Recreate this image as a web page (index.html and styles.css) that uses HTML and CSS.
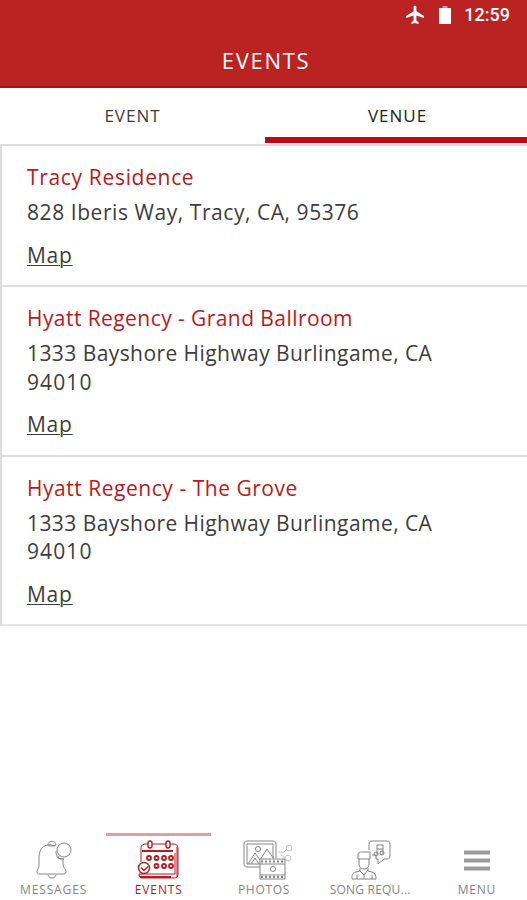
FILE: index.html
```html
<!DOCTYPE html>
<html lang="en">
<head>
<meta charset="utf-8">
<title>Events</title>
<link rel="stylesheet" href="styles.css">
</head>
<body>
<header class="header">
  <div class="status">
    <svg class="plane" viewBox="0 0 20 20"><path d="M19 13v-2l-7.600-4.700V2.100a1.400 1.400 0 0 0-2.800 0v4.200L1 11v2l7.600-2.400v5L6.500 17.200V19l3.500-1 3.500 1v-1.800l-2.100-1.600v-5z"/></svg>
    <svg class="battery" viewBox="0 0 12 18"><path class="cap" d="M3.500 0h5v2h-5z"/><path d="M0 2h12v16H0z"/></svg>
    <span class="time">12:59</span>
  </div>
  <h1 class="title">EVENTS</h1>
</header>
<nav class="tabs">
  <a class="tab">EVENT</a>
  <a class="tab tab-active">VENUE</a>
</nav>
<main class="venues">
  <section class="venue">
    <h2 class="name name-short">Tracy Residence</h2>
    <p class="address address-short">828 Iberis Way, Tracy, CA, 95376</p>
    <a class="map">Map</a>
  </section>
  <section class="venue venue-tall">
    <h2 class="name">Hyatt Regency - Grand Ballroom</h2>
    <p class="address">1333 Bayshore Highway Burlingame, CA<br><span class="zip">94010</span></p>
    <a class="map">Map</a>
  </section>
  <section class="venue venue-tall">
    <h2 class="name name-grove">Hyatt Regency - The Grove</h2>
    <p class="address">1333 Bayshore Highway Burlingame, CA<br><span class="zip">94010</span></p>
    <a class="map">Map</a>
  </section>
</main>
<footer class="bar">
  <a class="item">
    <svg class="icon" viewBox="0 0 52 44"><path d="M27 7c-9-4-16 2-16 11v8c0 4-2 4-2 7 0 2 1 2 3 2h23c2 0 3-1 3-3s-3-3-3-7v-6M20 6c0-5 8-5 8 0l-2 1h-4zM20 36c1 4 7 4 8 0"/><circle cx="36" cy="11" r="7"/><path d="M28 12c0 4 1 8 5 8h3M31 17l-1 2 4 1"/></svg>
    <span class="label label-wide">MESSAGES</span>
  </a>
  <a class="item item-active">
    <svg class="icon" viewBox="0 0 52 44"><path class="bold" d="M9 12h31M7 38h31"/><path d="M8 23V10c0-4 2-5 5-5h27c3 0 5 1 5 5v26c0 2-2 3-4 3H9c-2 0-3-1-3-4h36V14M44 8v30"/><rect class="holder" x="15" y="2" width="4" height="7" rx="2"/><rect class="holder" x="33" y="2" width="4" height="7" rx="2"/><g class="dates"><circle cx="16" cy="19" r="2"/><circle cx="23.500" cy="19" r="2"/><circle cx="31" cy="19" r="2"/><circle cx="38" cy="19" r="2"/><circle cx="23.500" cy="27" r="2"/><circle cx="31" cy="27" r="2"/><circle cx="38" cy="27" r="2"/></g><circle class="check" cx="11" cy="29" r="5.500"/><path class="tick" d="M8 28.500l3 3 4-4"/></svg>
    <span class="label label-active">EVENTS</span>
  </a>
  <a class="item">
    <svg class="icon" viewBox="0 0 52 44"><path d="M22 28H9c-2 0-3-1-3-3V5c0-2 1-3 3-3h26c2 0 3 1 3 3v14M22 25H9V5h26v14M10 25l7-11 5 7 7-11 7 10M13 25l4-6 4 6"/><circle cx="20" cy="10" r="2.500"/><path class="sheet" d="M22 20h25v20H22zM22 25h25M22 36h25"/><path class="film" d="M23 22.500h24M23 38h24"/><circle cx="35" cy="30" r="2.500"/><path class="faint" d="M40 13h6l3-3M43 16l4 3"/><circle class="faint" cx="51" cy="9" r="2.800"/><circle class="faint" cx="50" cy="19" r="2.800"/></svg>
    <span class="label">PHOTOS</span>
  </a>
  <a class="item">
    <svg class="icon icon-song" viewBox="0 0 52 44"><path d="M24 11V5c0-2 1-3 3-3h15c2 0 3 1 3 3v12c0 2-1 3-3 3h-3l-6 5v-5h-2v-4h-4M32 16V6h6v9M32 10h6"/><circle cx="31" cy="15" r="2"/><circle cx="37" cy="14" r="2"/><path d="M13 20v-4c0-3 2-3 4-3h8v7zM14 20v5c0 3 2 5 5 5s5-2 5-5v-5M15 29v3l-4 1c-4 1-4 3-4 7h24c0-4-1-6-4-7l-4-1v-3M14 31l5 5 4-5M19 36v4M12 36v4M27 36v4"/></svg>
    <span class="label label-narrow">SONG REQU...</span>
  </a>
  <a class="item item-menu">
    <svg class="icon" viewBox="0 0 52 44"><path class="menu" d="M13 13.500h26M13 21.500h26M13 29.500h26"/></svg>
    <span class="label">MENU</span>
  </a>
</footer>
</body>
</html>
```
FILE: styles.css
```css
* { box-sizing: border-box; }
body { margin: 0; height: 900px; display: flex; flex-direction: column; background: #fff; color: #3d3d3d; font-family: "Open Sans", sans-serif; overflow: hidden; }
.header { height: 88px; flex: none; background: #bb2322; border-bottom: 2px solid #b20b0d; color: #fff; }
.status { height: 30px; display: flex; align-items: center; justify-content: flex-end; padding-right: 17px; }
.plane { width: 20px; height: 20px; fill: #fff; }
.battery { width: 12px; height: 18px; fill: #fff; margin: 0 13px 0 14px; }
.cap { fill: #d98c8a; }
.time { font: 500 18px/30px Roboto, sans-serif; }
.title { margin: 14px 0 0; padding-left: 5px; text-align: center; font-weight: 400; font-size: 22px; line-height: 32px; letter-spacing: 1.7px; }
.tabs { height: 56px; flex: none; display: grid; grid-template-columns: 265px 1fr; }
.tab { height: 55px; padding-top: 1px; text-align: center; font-size: 17px; line-height: 53px; letter-spacing: 1px; }
.tab-active { border-bottom: 6px solid #b70c12; color: #222; padding-left: 3px; }
.venues { flex: none; border-left: 2px solid #ddd; border-bottom: 2px solid #e4e4e4; }
.venue { height: 141px; border-top: 2px solid #ddd; padding: 16px 0 0 25px; }
.venue-tall { height: 169.5px; }
.name, .address { margin: 0; font-weight: 400; font-size: 21px; letter-spacing: 0.43px; white-space: nowrap; }
.name { color: #bd171c; line-height: 30px; }
.name-short { letter-spacing: 0.67px; }
.name-grove { letter-spacing: 0.53px; }
.address { margin-top: 6px; line-height: 28.500px; }
.address-short { letter-spacing: 0.56px; }
.zip { letter-spacing: 1.1px; }
.map { display: block; width: max-content; margin-top: 14px; font-size: 21px; line-height: 28px; letter-spacing: 0.7px; text-decoration: underline; text-decoration-thickness: 1px; text-underline-offset: 2px; }
.bar { height: 67px; margin: auto 0 0 1px; display: grid; grid-template-columns: repeat(5, 1fr); color: #858585; }
.item { min-width: 0; display: flex; flex-direction: column; align-items: center; border-top: 3px solid transparent; padding-top: 3px; }
.item-active { border-top-color: #dea0a0; color: #b71a20; }
.item-menu { padding-left: 5px; }
.icon { width: 52px; height: 44px; flex: none; fill: none; stroke: currentColor; stroke-width: 1; overflow: visible; }
.icon-song { margin-left: 3px; }
.label { font-size: 12px; line-height: 14px; letter-spacing: 0.7px; white-space: nowrap; }
.label-wide { letter-spacing: 0.85px; }
.label-active { letter-spacing: 0.9px; font-weight: 500; }
.label-narrow { letter-spacing: 0.2px; padding-left: 2px; }
.bold, .dates { stroke-width: 1.800; }
.holder, .check, .sheet { fill: #fff; }
.holder, .check, .tick { stroke-width: 1.400; }
.film { stroke-dasharray: 2 2; stroke-width: 2; }
.faint { opacity: 0.5; }
.menu { stroke: #999; stroke-width: 4; }
```
